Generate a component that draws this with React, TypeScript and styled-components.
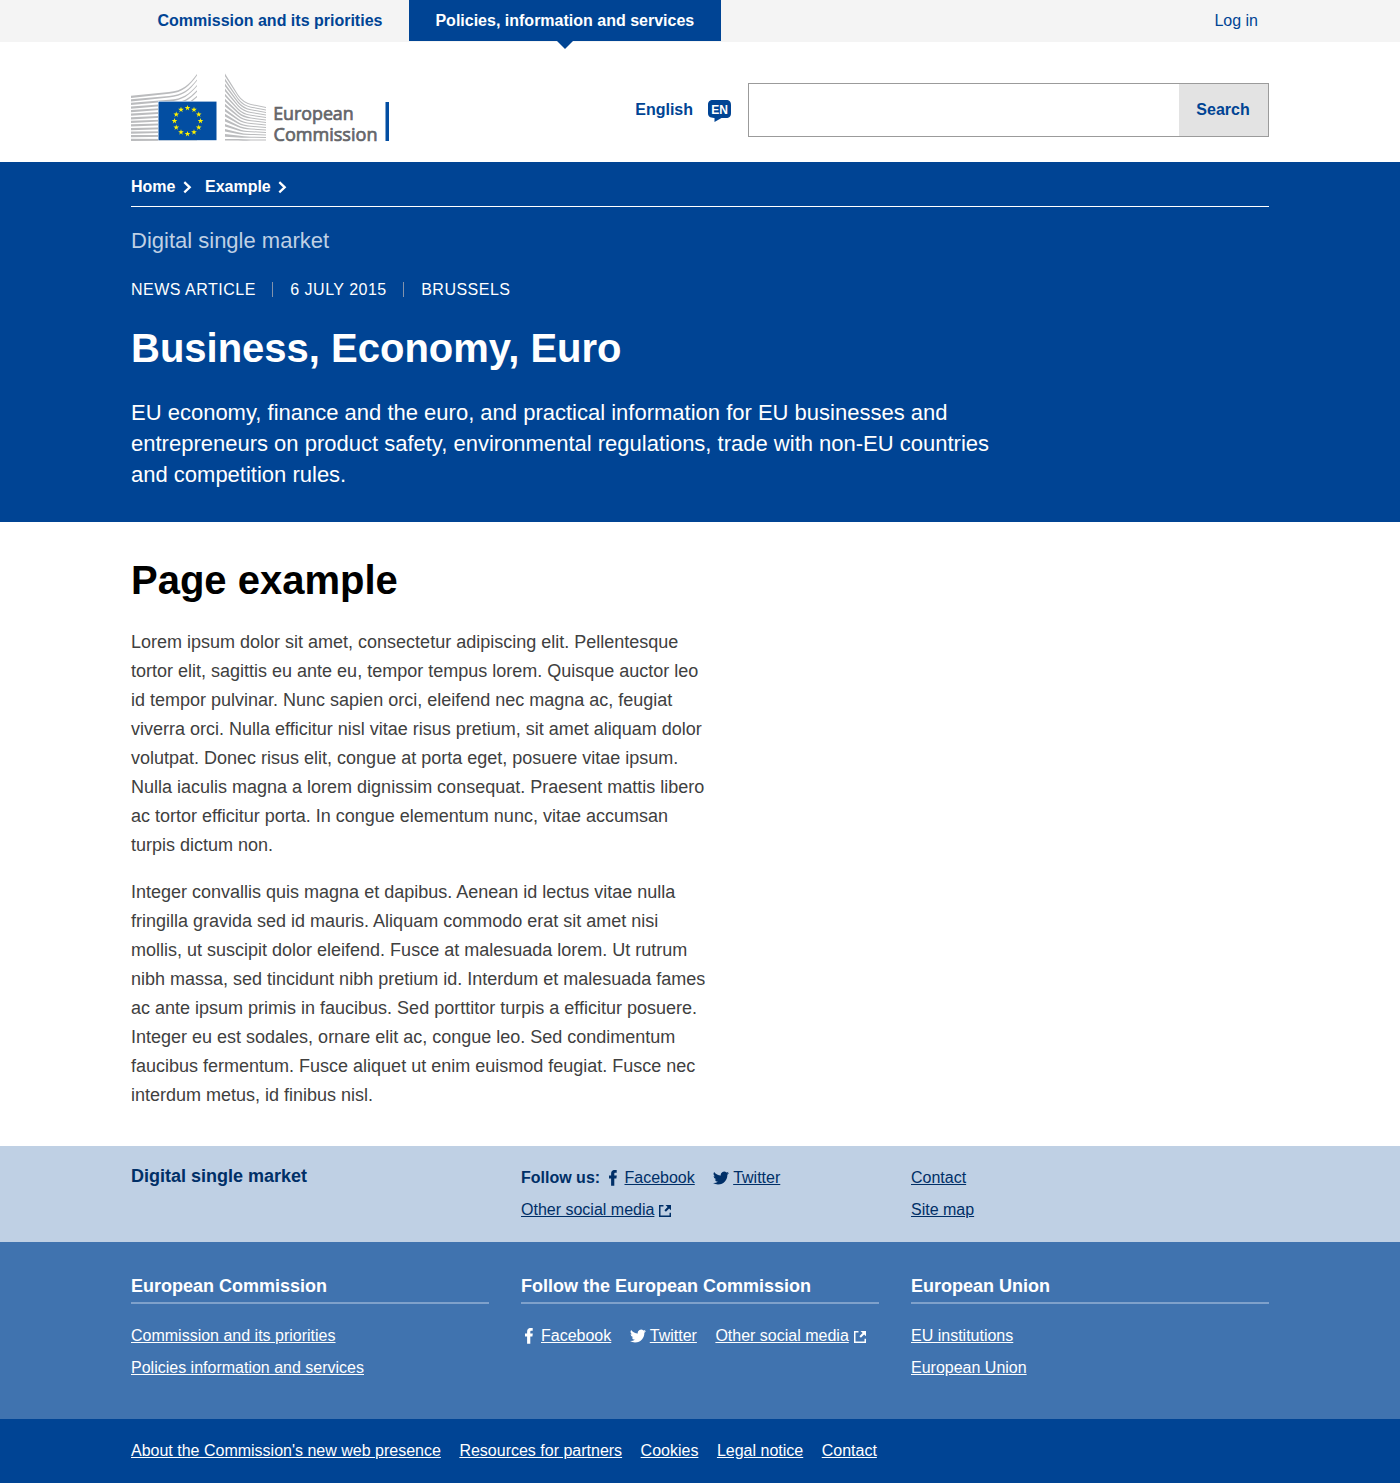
import React from 'react';
import styled, { createGlobalStyle } from 'styled-components';

const Global = createGlobalStyle`
  * { box-sizing: border-box; }
  body { margin: 0; background: #fff; font-family: Arial, "Liberation Sans", sans-serif; font-size: 16px; color: #404040; }
  h1, h2, h3, p, ul { margin: 0; padding: 0; }
  svg { display: block; flex: none; }
`;

const Container = styled.div`
  width: 1138px;
  margin: 0 auto;
`;

const TopBar = styled.div`
  background: #f4f4f4;
  height: 42px;
`;
const TopInner = styled(Container)`
  display: flex;
  align-items: flex-start;
`;
const Tab = styled.a<{ $active?: boolean }>`
  position: relative;
  height: 41px;
  line-height: 41px;
  padding: 0 26.5px;
  font-weight: 700;
  color: ${p => (p.$active ? '#fff' : '#004494')};
  background: ${p => (p.$active ? '#004494' : 'transparent')};
  ${p => p.$active && `
    &::after {
      content: '';
      position: absolute;
      top: 100%;
      left: 50%;
      margin-left: -8px;
      border: 8px solid transparent;
      border-top-color: #004494;
      border-bottom: 0;
    }
  `}
`;
const Login = styled.a`
  margin-left: auto;
  margin-right: 11px;
  line-height: 41px;
  color: #004494;
`;

const Header = styled(Container)`
  height: 120px;
  display: flex;
  align-items: flex-start;
  font-weight: 700;
  color: #004494;
`;
const LogoBox = styled.div`
  margin-top: 30px;
  font-weight: 400;
`;
const Language = styled.a`
  margin: 57px 16px 0 auto;
  display: flex;
  gap: 15px;
  line-height: 22px;
`;
const SearchForm = styled.form`
  margin: 41px 0 0;
  width: 521px;
  height: 54px;
  display: flex;
  border: 1px solid #9b9b9b;
`;
const SearchInput = styled.input`
  flex: 1;
  min-width: 0;
  border: 0;
  outline: 0;
`;
const SearchButton = styled.button`
  width: 89px;
  border: 0;
  padding: 0 1px 0 0;
  background: #e3e3e3;
  color: #004494;
  font: 700 16px Arial, "Liberation Sans", sans-serif;
`;

const Hero = styled.section`
  background: #004494;
  height: 360px;
  color: #fff;
`;
const Crumbs = styled.nav`
  height: 45px;
  padding-top: 13px;
  display: flex;
  align-items: flex-start;
  border-bottom: 1px solid #fff;
  font-weight: 700;
  line-height: 24px;
`;
const Crumb = styled.a`
  display: flex;
  align-items: center;
  gap: 7.5px;
  margin-right: 13px;
`;
const SiteName = styled.p`
  margin-top: 18px;
  font-size: 22px;
  line-height: 31px;
  color: #bfd0e4;
`;
const Meta = styled.div`
  margin-top: 22px;
  display: flex;
  font-size: 16px;
  line-height: 24px;
  letter-spacing: 0.5px;
  text-transform: uppercase;
`;
const MetaItem = styled.span`
  & + & {
    display: flex;
    align-items: center;
  }
  & + &::before {
    content: '';
    width: 1px;
    height: 15px;
    margin: 0 17.300px 2px 16.100px;
    background: #8293ac;
  }
`;
const Title = styled.h1`
  font-size: 40px;
  line-height: 48px;
  font-weight: 700;
`;
const HeroTitle = styled(Title)`
  margin-top: 22px;
`;
const Intro = styled.p`
  margin-top: 25px;
  width: 870px;
  font-size: 22px;
  line-height: 31px;
`;

const Main = styled(Container)`
  height: 624px;
  padding-top: 34px;
`;
const PageTitle = styled(Title)`
  color: #000;
  margin-bottom: 24px;
`;
const Paragraph = styled.p`
  width: 580px;
  font-size: 18px;
  line-height: 29px;
  margin-bottom: 18px;
`;

const Columns = styled(Container)`
  display: grid;
  grid-template-columns: repeat(3, 358px);
  column-gap: 32px;
`;
const SiteFooter = styled.section`
  height: 96px;
  padding-top: 16px;
  background: #bfd0e4;
  color: #002f67;
`;
const SiteFooterTitle = styled.h3`
  font-size: 18px;
  line-height: 28px;
`;
const LinkRow = styled.div<{ $gap?: number }>`
  display: flex;
  align-items: center;
  height: 32px;
  gap: ${p => p.$gap ?? 18}px;
`;
const Social = styled.span<{ $gap?: number }>`
  display: inline-flex;
  align-items: center;
  gap: ${p => p.$gap ?? 4}px;
`;
const Link = styled.a`
  text-decoration: underline;
`;
const CommissionFooter = styled.section`
  height: 177px;
  padding-top: 30px;
  background: #4073af;
  color: #fff;
`;
const ColumnTitle = styled.h3`
  height: 32px;
  font-size: 18px;
  line-height: 28px;
  border-bottom: 2px solid #7fa1cb;
  margin-bottom: 16px;
`;
const LegalFooter = styled.section`
  height: 64px;
  padding-top: 16px;
  background: #004494;
  color: #fff;
`;

const Chevron = () => (
  <svg width="9" height="13" viewBox="0 0 9 13" fill="none" stroke="currentColor" strokeWidth="2.300">
    <path d="M1.300 1.200 6.700 6.300 1.300 11.400" />
  </svg>
);
const FacebookIcon = () => (
  <svg width="16" height="16" viewBox="0 0 16 16" fill="currentColor">
    <path d="M6.100 15.800V8.500H4V5.400h2.100V3.700C6.100 1.200 7.500-.1 9.700-.1c.9 0 1.700.1 2 .1v2.800h-1.200c-1 0-1.200.5-1.200 1.200v1.400h2.500l-.4 3.100H9.300v7.300z" />
  </svg>
);
const TwitterIcon = () => (
  <svg width="16" height="16" viewBox="0 0 24 24" fill="currentColor">
    <path d="M24 4.600a10 10 0 0 1-2.800.8 4.900 4.900 0 0 0 2.100-2.700 9.900 9.900 0 0 1-3.100 1.200 4.900 4.900 0 0 0-8.400 4.500A14 14 0 0 1 1.700 3.100a4.900 4.900 0 0 0 1.500 6.600 4.900 4.900 0 0 1-2.200-.6v.1a4.900 4.900 0 0 0 3.900 4.800 5 5 0 0 1-2.200.1 4.900 4.900 0 0 0 4.600 3.400A9.900 9.900 0 0 1 0 19.500a14 14 0 0 0 7.500 2.200c9.100 0 14-7.500 14-14v-.6A10 10 0 0 0 24 4.600z" />
  </svg>
);
const ExternalIcon = () => (
  <svg width="14" height="13" viewBox="0 0 14 13" fill="currentColor">
    <path d="M5.500 1H1v12h12V8.700h-1.500v2.800h-9v-9h3zM7.500 1H13v5.300l-1.900-1.800-3.200 3.300-1.500-1.500 3.200-3.300z" />
  </svg>
);
const LanguageIcon = () => (
  <svg width="24" height="24" viewBox="0 0 24 24">
    <path fill="#004494" d="M5 1h13c3.500 0 5 1.500 5 5v8c0 3.500-1.500 5-5 5h-4.500L6.500 23v-4.100C2 19 0 17.500 0 14V6C0 2.500 1.500 1 5 1z" />
    <text x="11.500" y="15" textAnchor="middle" fill="#fff" fontSize="12" fontWeight="700" fontFamily="Liberation Sans, sans-serif">EN</text>
  </svg>
);

const STAR = '0,-2.9 .7,-.9 2.8,-.9 1.100,.4 1.700,2.400 0,1.100 -1.700,2.400 -1.100,.4 -2.800,-.9 -.7,-.9';

const LEFT_SLATS = Array.from({ length: 13 }, (_, i) => {
  const k = 1 - i / 12;
  const y = 67.800 - 43 * k;
  const x1 = y - 4 * k;
  const end = 67.800 - 65.300 * k;
  const bend = x1 - (x1 - end) * 0.4;
  return `M0 ${y - 1.100} L38 ${x1 - 0.800} C52 ${x1 - 1.500 * k - 0.700} 58 ${bend - 0.600} 66 ${end - 0.500} V${end + 0.900} C58 ${bend + 1} 52 ${x1 - 1.500 * k + 1} 38 ${x1 + 0.900} L0 ${y + 1.100}Z`;
});

const RIGHT_SLATS = Array.from({ length: 14 }, (_, i) => {
  const k = 1 - i / 13;
  const y = 67.500 - 65.500 * k;
  const knee = y + 21 * k;
  const end = 67.900 - 32.500 * k;
  const lift = end - 5 * k;
  const base = Math.min(y + 2.200, 68.600);
  return `M94 ${y - 0.500} L107 ${knee - 0.500} Q112 ${lift - 0.500} 120 ${end - 3 * k - 0.500} L135 ${end - 0.500} V${end + 0.500} L120 ${end - 3 * k + 0.500} Q112 ${lift + 0.900} 107 ${Math.min(knee + 1.300, 68.500)} L94 ${base}Z`;
});

const Logo = () => (
  <svg width="260" height="72" viewBox="0 0 260 72">
    <g fill="#bbbcbe">
      {LEFT_SLATS.map(d => <path key={d} d={d} />)}
      {RIGHT_SLATS.map(d => <path key={d} d={d} />)}
    </g>
    <rect x="27" y="29" width="59" height="39.600" fill="#fff" />
    <rect x="27.500" y="29.600" width="58" height="38.600" fill="#034ea2" />
    {Array.from({ length: 12 }, (_, i) => {
      const a = (i * Math.PI) / 6;
      return <polygon key={i} fill="#fff200" points={STAR} transform={`translate(${56.500 + 13 * Math.sin(a)} ${49 - 13 * Math.cos(a)})`} />;
    })}
    <g fill="#646569" stroke="#646569" strokeWidth="0.700" fontFamily="Open Sans, sans-serif" fontSize="18">
      <text x="142.200" y="48.300" textLength="80.500" lengthAdjust="spacingAndGlyphs">European</text>
      <text x="142.500" y="68.500" textLength="104" lengthAdjust="spacingAndGlyphs">Commission</text>
    </g>
    <rect x="254.500" y="30" width="3.500" height="39" fill="#034ea2" />
  </svg>
);

export default function App() {
  return (
    <>
      <Global />
      <TopBar>
        <TopInner>
          <Tab>Commission and its priorities</Tab>
          <Tab $active>Policies, information and services</Tab>
          <Login>Log in</Login>
        </TopInner>
      </TopBar>
      <Header>
        <LogoBox><Logo /></LogoBox>
        <Language>English <LanguageIcon /></Language>
        <SearchForm>
          <SearchInput />
          <SearchButton type="button">Search</SearchButton>
        </SearchForm>
      </Header>
      <Hero>
        <Container>
          <Crumbs>
            <Crumb>Home <Chevron /></Crumb>
            <Crumb>Example <Chevron /></Crumb>
          </Crumbs>
          <SiteName>Digital single market</SiteName>
          <Meta>
            <MetaItem>News article</MetaItem>
            <MetaItem>6 July 2015</MetaItem>
            <MetaItem>Brussels</MetaItem>
          </Meta>
          <HeroTitle>Business, Economy, Euro</HeroTitle>
          <Intro>EU economy, finance and the euro, and practical information for EU businesses and entrepreneurs on product safety, environmental regulations, trade with non-EU countries and competition rules.</Intro>
        </Container>
      </Hero>
      <Main>
        <PageTitle>Page example</PageTitle>
        <Paragraph>Lorem ipsum dolor sit amet, consectetur adipiscing elit. Pellentesque tortor elit, sagittis eu ante eu, tempor tempus lorem. Quisque auctor leo id tempor pulvinar. Nunc sapien orci, eleifend nec magna ac, feugiat viverra orci. Nulla efficitur nisl vitae risus pretium, sit amet aliquam dolor volutpat. Donec risus elit, congue at porta eget, posuere vitae ipsum. Nulla iaculis magna a lorem dignissim consequat. Praesent mattis libero ac tortor efficitur porta. In congue elementum nunc, vitae accumsan turpis dictum non.</Paragraph>
        <Paragraph>Integer convallis quis magna et dapibus. Aenean id lectus vitae nulla fringilla gravida sed id mauris. Aliquam commodo erat sit amet nisi mollis, ut suscipit dolor eleifend. Fusce at malesuada lorem. Ut rutrum nibh massa, sed tincidunt nibh pretium id. Interdum et malesuada fames ac ante ipsum primis in faucibus. Sed porttitor turpis a efficitur posuere. Integer eu est sodales, ornare elit ac, congue leo. Sed condimentum faucibus fermentum. Fusce aliquet ut enim euismod feugiat. Fusce nec interdum metus, id finibus nisl.</Paragraph>
      </Main>
      <SiteFooter>
        <Columns>
          <SiteFooterTitle>Digital single market</SiteFooterTitle>
          <div>
            <LinkRow $gap={18.4}>
              <Social $gap={4.4}><b>Follow us:</b><Social><FacebookIcon /><Link>Facebook</Link></Social></Social>
              <Social><TwitterIcon /><Link>Twitter</Link></Social>
            </LinkRow>
            <LinkRow><Social><Link>Other social media</Link><ExternalIcon /></Social></LinkRow>
          </div>
          <div>
            <LinkRow><Link>Contact</Link></LinkRow>
            <LinkRow><Link>Site map</Link></LinkRow>
          </div>
        </Columns>
      </SiteFooter>
      <CommissionFooter>
        <Columns>
          <div>
            <ColumnTitle>European Commission</ColumnTitle>
            <LinkRow><Link>Commission and its priorities</Link></LinkRow>
            <LinkRow><Link>Policies information and services</Link></LinkRow>
          </div>
          <div>
            <ColumnTitle>Follow the European Commission</ColumnTitle>
            <LinkRow $gap={18.5}>
              <Social><FacebookIcon /><Link>Facebook</Link></Social>
              <Social><TwitterIcon /><Link>Twitter</Link></Social>
              <Social><Link>Other social media</Link><ExternalIcon /></Social>
            </LinkRow>
          </div>
          <div>
            <ColumnTitle>European Union</ColumnTitle>
            <LinkRow><Link>EU institutions</Link></LinkRow>
            <LinkRow><Link>European Union</Link></LinkRow>
          </div>
        </Columns>
      </CommissionFooter>
      <LegalFooter>
        <Container>
          <LinkRow $gap={18.5}>
            <Link>About the Commission's new web presence</Link>
            <Link>Resources for partners</Link>
            <Link>Cookies</Link>
            <Link>Legal notice</Link>
            <Link>Contact</Link>
          </LinkRow>
        </Container>
      </LegalFooter>
    </>
  );
}
